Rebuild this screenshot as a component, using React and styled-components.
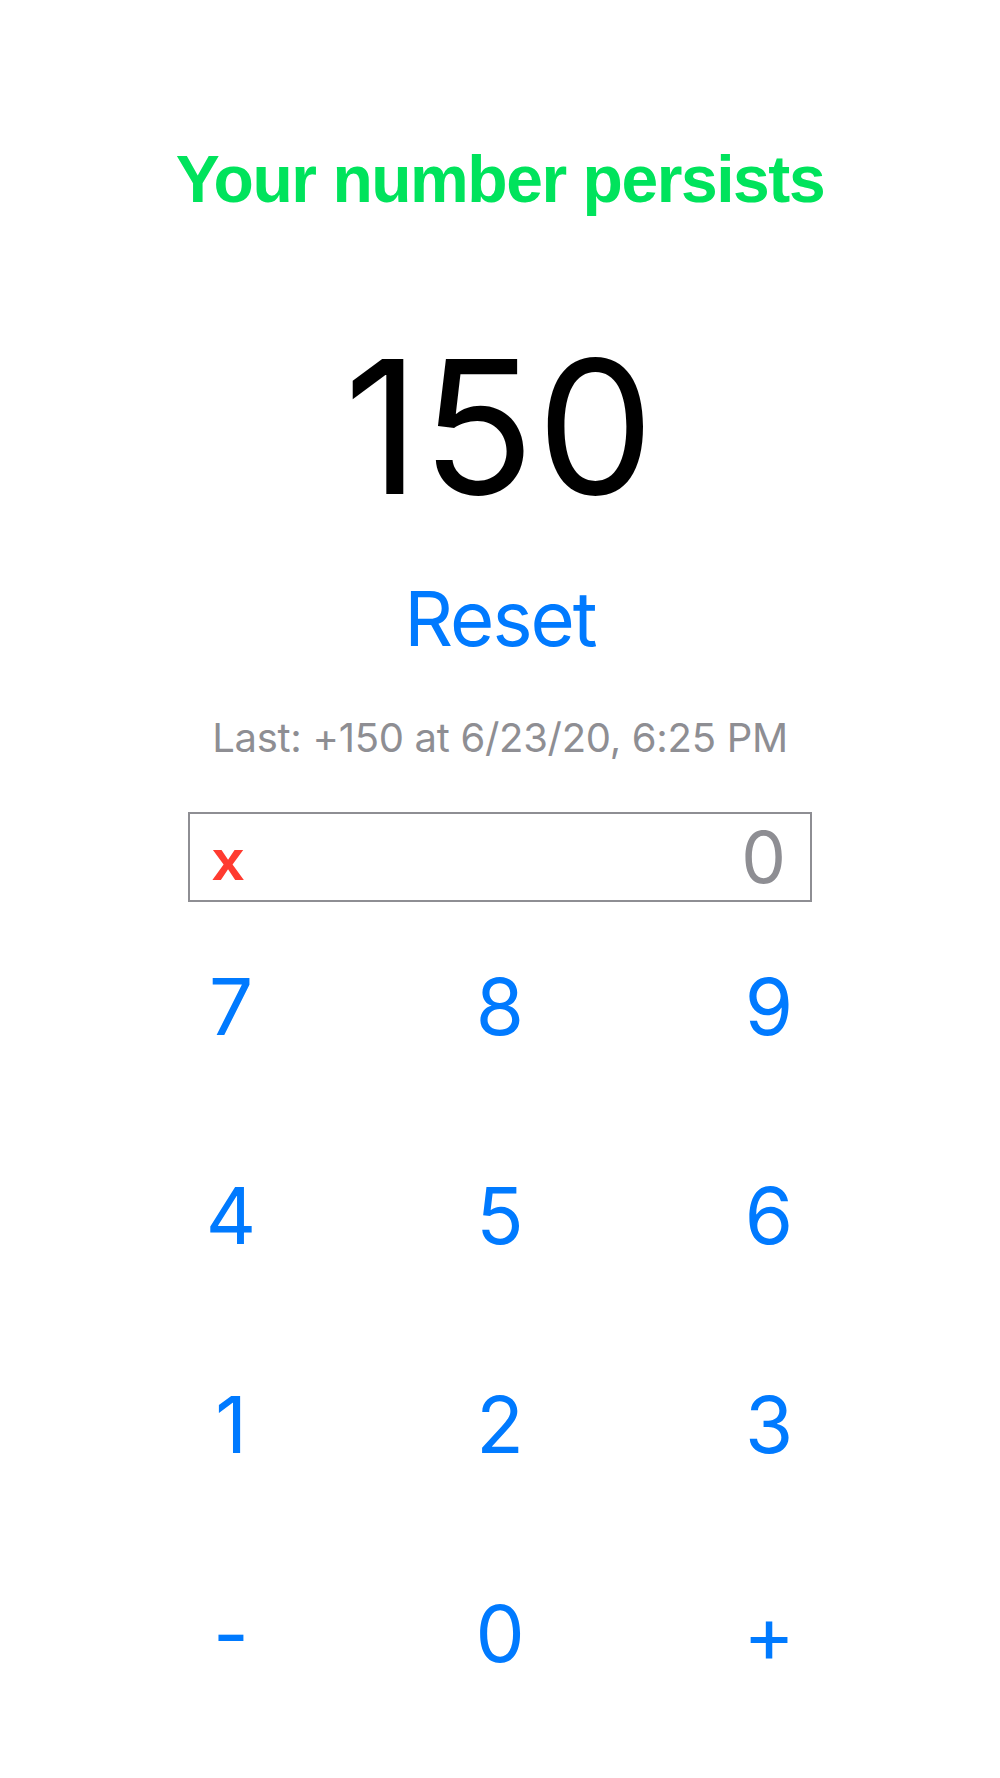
import React from 'react'
import styled, { createGlobalStyle } from 'styled-components'

const colors = {
  green: '#00e35c',
  blue: '#007aff',
  red: '#ff3b30',
  gray: '#8e8e93',
  black: '#000000',
}

const GlobalStyle = createGlobalStyle`
  html, body {
    margin: 0;
    padding: 0;
    background: #ffffff;
  }
  body {
    font-family: Inter, 'Liberation Sans', sans-serif;
  }
`

const Screen = styled.div`
  width: 1000px;
  min-height: 1778px;
  display: flex;
  flex-direction: column;
  align-items: center;
`

const Title = styled.h1`
  margin: 141px 0 0;
  font-family: 'Liberation Sans', Arial, sans-serif;
  font-weight: 700;
  font-size: 66px;
  line-height: 76px;
  letter-spacing: -1.45px;
  color: ${colors.green};
`

const Count = styled.div`
  margin-top: 117px;
  font-size: 186px;
  line-height: 186px;
  font-weight: 400;
  color: ${colors.black};
  letter-spacing: 2px;
`

const ResetButton = styled.button`
  margin-top: 60px;
  padding: 0;
  border: none;
  background: none;
  font-family: inherit;
  font-size: 76px;
  line-height: 76px;
  color: ${colors.blue};
  letter-spacing: -2px;
  cursor: pointer;
`

const LastEntry = styled.div`
  margin-top: 60px;
  font-size: 40px;
  line-height: 43px;
  color: ${colors.gray};
  letter-spacing: -0.3px;
`

const EntryBox = styled.div`
  margin-top: 53px;
  box-sizing: border-box;
  width: 624px;
  height: 90px;
  border: 2px solid ${colors.gray};
  display: flex;
  align-items: center;
  justify-content: space-between;
  padding: 0 24px 0 22px;
`

const ClearMark = styled.span`
  font-family: 'Liberation Sans', Arial, sans-serif;
  font-weight: 700;
  font-size: 58px;
  line-height: 1;
  color: ${colors.red};
  padding-top: 6px;
`

const EntryValue = styled.span`
  font-size: 71px;
  line-height: 1;
  color: ${colors.gray};
`

const Keypad = styled.div`
  display: grid;
  grid-template-columns: repeat(3, 269px);
  grid-auto-rows: 209px;
`

const Key = styled.button`
  padding: 0;
  border: none;
  background: none;
  font-family: inherit;
  font-size: 78px;
  line-height: 209px;
  color: ${colors.blue};
  text-align: center;
  cursor: pointer;
`

const keys = ['7', '8', '9', '4', '5', '6', '1', '2', '3', '-', '0', '+']

export default function App() {
  return (
    <>
      <GlobalStyle />
      <Screen>
        <Title>Your number persists</Title>
        <Count>150</Count>
        <ResetButton>Reset</ResetButton>
        <LastEntry>Last: +150 at 6/23/20, 6:25 PM</LastEntry>
        <EntryBox>
          <ClearMark>x</ClearMark>
          <EntryValue>0</EntryValue>
        </EntryBox>
        <Keypad>
          {keys.map((k) => (
            <Key key={k}>{k}</Key>
          ))}
        </Keypad>
      </Screen>
    </>
  )
}
